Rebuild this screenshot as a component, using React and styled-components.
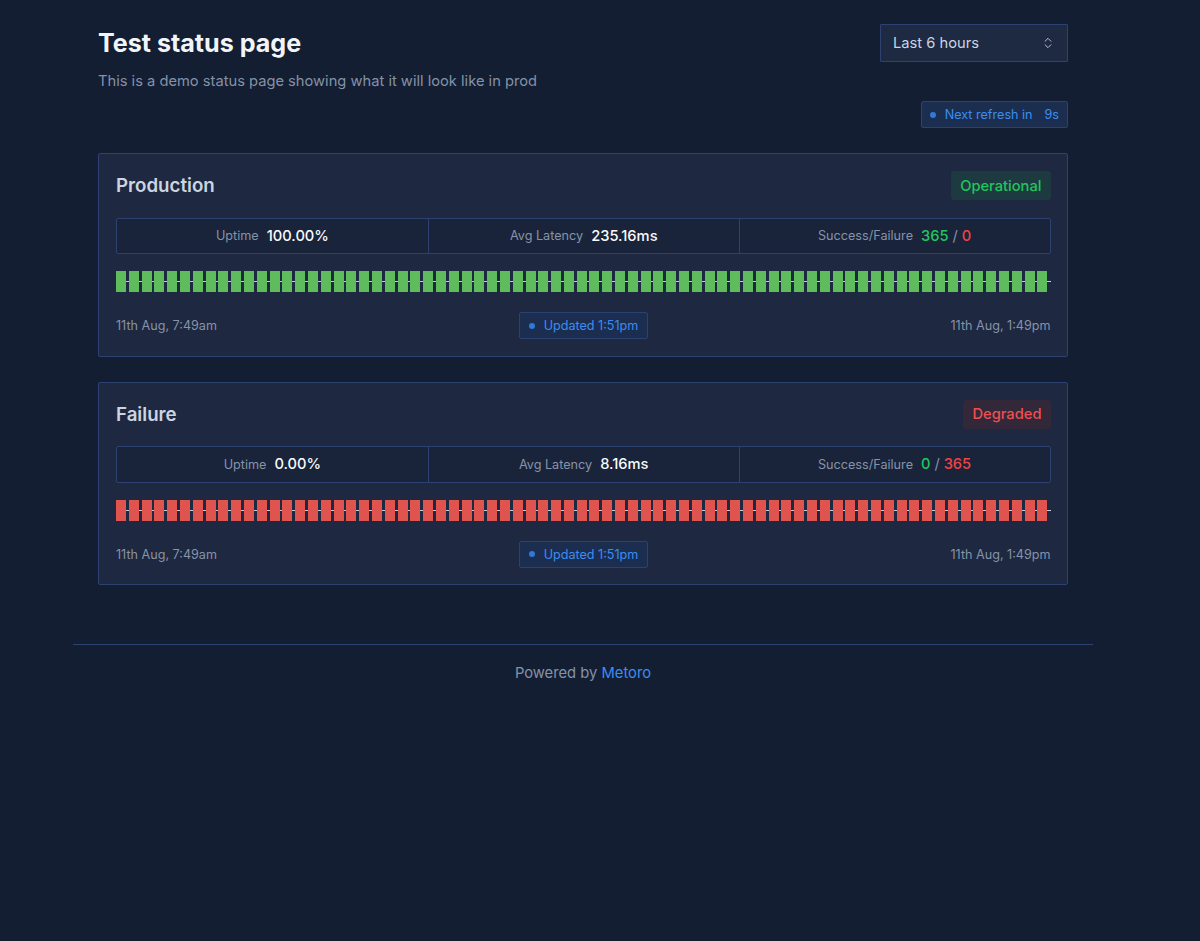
import styled, { createGlobalStyle } from 'styled-components';
import { ChevronsUpDown } from 'lucide-react';

const GlobalStyle = createGlobalStyle`
  html, body {
    margin: 0;
    padding: 0;
    background-color: #131e32;
    font-family: Inter, "Liberation Sans", sans-serif;
  }
`;

const Page = styled.div`
  min-height: 941px;
  padding: 0 107px 0 73px;
  background-color: #131e32;
  box-sizing: border-box;
`;

const Content = styled.div`
  padding: 24px 25px 0;
`;

const Header = styled.div`
  display: flex;
  justify-content: space-between;
  align-items: flex-start;
`;

const Heading = styled.div`
  display: flex;
  flex-direction: column;
`;

const Title = styled.h1`
  margin: 0;
  height: 38px;
  line-height: 38px;
  font-size: 25.1px;
  font-weight: 700;
  color: #f1f5f9;
`;

const Subtitle = styled.p`
  margin: 8px 0 0;
  font-size: 14.7px;
  line-height: 22px;
  color: #8492a8;
`;

const Select = styled.div`
  display: flex;
  align-items: center;
  justify-content: space-between;
  width: 188px;
  height: 38px;
  padding: 0 12px;
  box-sizing: border-box;
  background-color: #1e2942;
  border: 1px solid #2d4270;
  border-radius: 1px;
  font-size: 14.7px;
  color: #cbd5e1;
`;

const RefreshRow = styled.div`
  display: flex;
  justify-content: flex-end;
  margin-top: 9px;
`;

const Pill = styled.div`
  display: inline-flex;
  align-items: center;
  height: 27px;
  box-sizing: border-box;
  padding: 0 ${props => (props.$tight ? '8px' : '9px')};
  margin-left: ${props => (props.$tight ? '0' : '1px')};
  gap: ${props => (props.$tight ? '8.5px' : '8.5px')};
  background-color: #1c2e50;
  border: 1px solid #2a4270;
  border-radius: 2px;
  font-size: 12.6px;
  color: #3b8df0;
`;

const Dot = styled.span`
  width: 6px;
  height: 6px;
  border-radius: 50%;
  background-color: #2f7ad6;
`;

const Countdown = styled.span`
  margin-left: 3.5px;
`;

const Cards = styled.div`
  display: flex;
  flex-direction: column;
  gap: 25px;
  margin-top: 25px;
`;

const Card = styled.section`
  padding: 16px 16.5px 17px 17px;
  height: 203.5px;
  box-sizing: border-box;
  background-color: #1e2840;
  border: 1px solid #2d4270;
  border-radius: 2px;
`;

const CardHeader = styled.div`
  display: flex;
  justify-content: space-between;
  align-items: center;
  height: 31.5px;
`;

const CardTitle = styled.h2`
  margin: 0;
  font-size: 18.7px;
  font-weight: 600;
  color: #cbd5e1;
`;

const Status = styled.span`
  display: inline-flex;
  align-items: center;
  height: 29px;
  padding: 0 9px;
  border-radius: 3px;
  font-size: 14.7px;
  font-weight: 500;
  color: ${props => (props.$ok ? '#22c55e' : '#ee4f4f')};
  background-color: ${props => (props.$ok ? '#1c3a40' : '#32283a')};
`;

const Stats = styled.div`
  display: grid;
  grid-template-columns: repeat(3, 1fr);
  margin-top: 16px;
  height: 36.5px;
  box-sizing: border-box;
  background-color: #19233a;
  border: 1px solid #2d4270;
  border-radius: 2px;
`;

const Stat = styled.div`
  display: flex;
  align-items: center;
  justify-content: center;
  gap: 8px;
  & + & {
    border-left: 1px solid #2d4270;
  }
`;

const StatLabel = styled.span`
  font-size: 12.65px;
  color: #8693a9;
`;

const StatValue = styled.span`
  font-size: 14.7px;
  font-weight: 500;
  color: #f8fafc;
`;

const Count = styled.span`
  color: ${props => (props.$ok ? '#22c55e' : '#ef4444')};
`;

const Slash = styled.span`
  color: #8492a8;
  font-weight: 400;
`;

const Chart = styled.div`
  position: relative;
  display: flex;
  gap: 2.8px;
  height: 21px;
  margin-top: 17px;

  &::before {
    content: '';
    position: absolute;
    left: 0;
    right: 0;
    top: 10px;
    height: 1px;
    background-color: #c8ccd4;
  }
`;

const Bar = styled.div`
  position: relative;
  width: 10px;
  flex: none;
  background-color: ${props => (props.$ok ? '#5fbc5c' : '#e0544f')};
`;

const CardFooter = styled.div`
  display: grid;
  grid-template-columns: 1fr auto 1fr;
  align-items: center;
  margin-top: 20px;
`;

const Time = styled.span`
  font-size: 12.6px;
  color: #8693a9;
  text-align: ${props => (props.$right ? 'right' : 'left')};
`;

const Footer = styled.footer`
  margin-top: 59px;
  padding-top: 17px;
  border-top: 1px solid #2d4270;
  text-align: center;
  font-size: 14.75px;
  line-height: 22px;
  color: #8492a8;
  width: 1020px;
  box-sizing: border-box;
`;

const Link = styled.a`
  color: #3b8df0;
  text-decoration: none;
`;

const services = [
  { name: 'Production', ok: true, status: 'Operational', uptime: '100.00%', latency: '235.16ms', success: 365, failure: 0 },
  { name: 'Failure', ok: false, status: 'Degraded', uptime: '0.00%', latency: '8.16ms', success: 0, failure: 365 },
];

const bars = Array.from({ length: 73 }, (_, i) => i);

const ServiceCard = ({ service }) => (
  <Card>
    <CardHeader>
      <CardTitle>{service.name}</CardTitle>
      <Status $ok={service.ok}>{service.status}</Status>
    </CardHeader>
    <Stats>
      <Stat>
        <StatLabel>Uptime</StatLabel>
        <StatValue>{service.uptime}</StatValue>
      </Stat>
      <Stat>
        <StatLabel>Avg Latency</StatLabel>
        <StatValue>{service.latency}</StatValue>
      </Stat>
      <Stat>
        <StatLabel>Success/Failure</StatLabel>
        <StatValue>
          <Count $ok>{service.success}</Count> <Slash>/</Slash> <Count>{service.failure}</Count>
        </StatValue>
      </Stat>
    </Stats>
    <Chart>
      {bars.map(i => <Bar key={i} $ok={service.ok} />)}
    </Chart>
    <CardFooter>
      <Time>11th Aug, 7:49am</Time>
      <Pill>
        <Dot />
        Updated 1:51pm
      </Pill>
      <Time $right>11th Aug, 1:49pm</Time>
    </CardFooter>
  </Card>
);

const App = () => (
  <Page>
    <GlobalStyle />
    <Content>
      <Header>
        <Heading>
          <Title>Test status page</Title>
          <Subtitle>This is a demo status page showing what it will look like in prod</Subtitle>
        </Heading>
        <Select>
          Last 6 hours
          <ChevronsUpDown size={14} strokeWidth={1.5} color="#cbd5e1" />
        </Select>
      </Header>
      <RefreshRow>
        <Pill $tight>
          <Dot />
          Next refresh in
          <Countdown>9s</Countdown>
        </Pill>
      </RefreshRow>
      <Cards>
        {services.map(service => <ServiceCard key={service.name} service={service} />)}
      </Cards>
    </Content>
    <Footer>
      Powered by <Link href="#">Metoro</Link>
    </Footer>
  </Page>
);

export default App;
